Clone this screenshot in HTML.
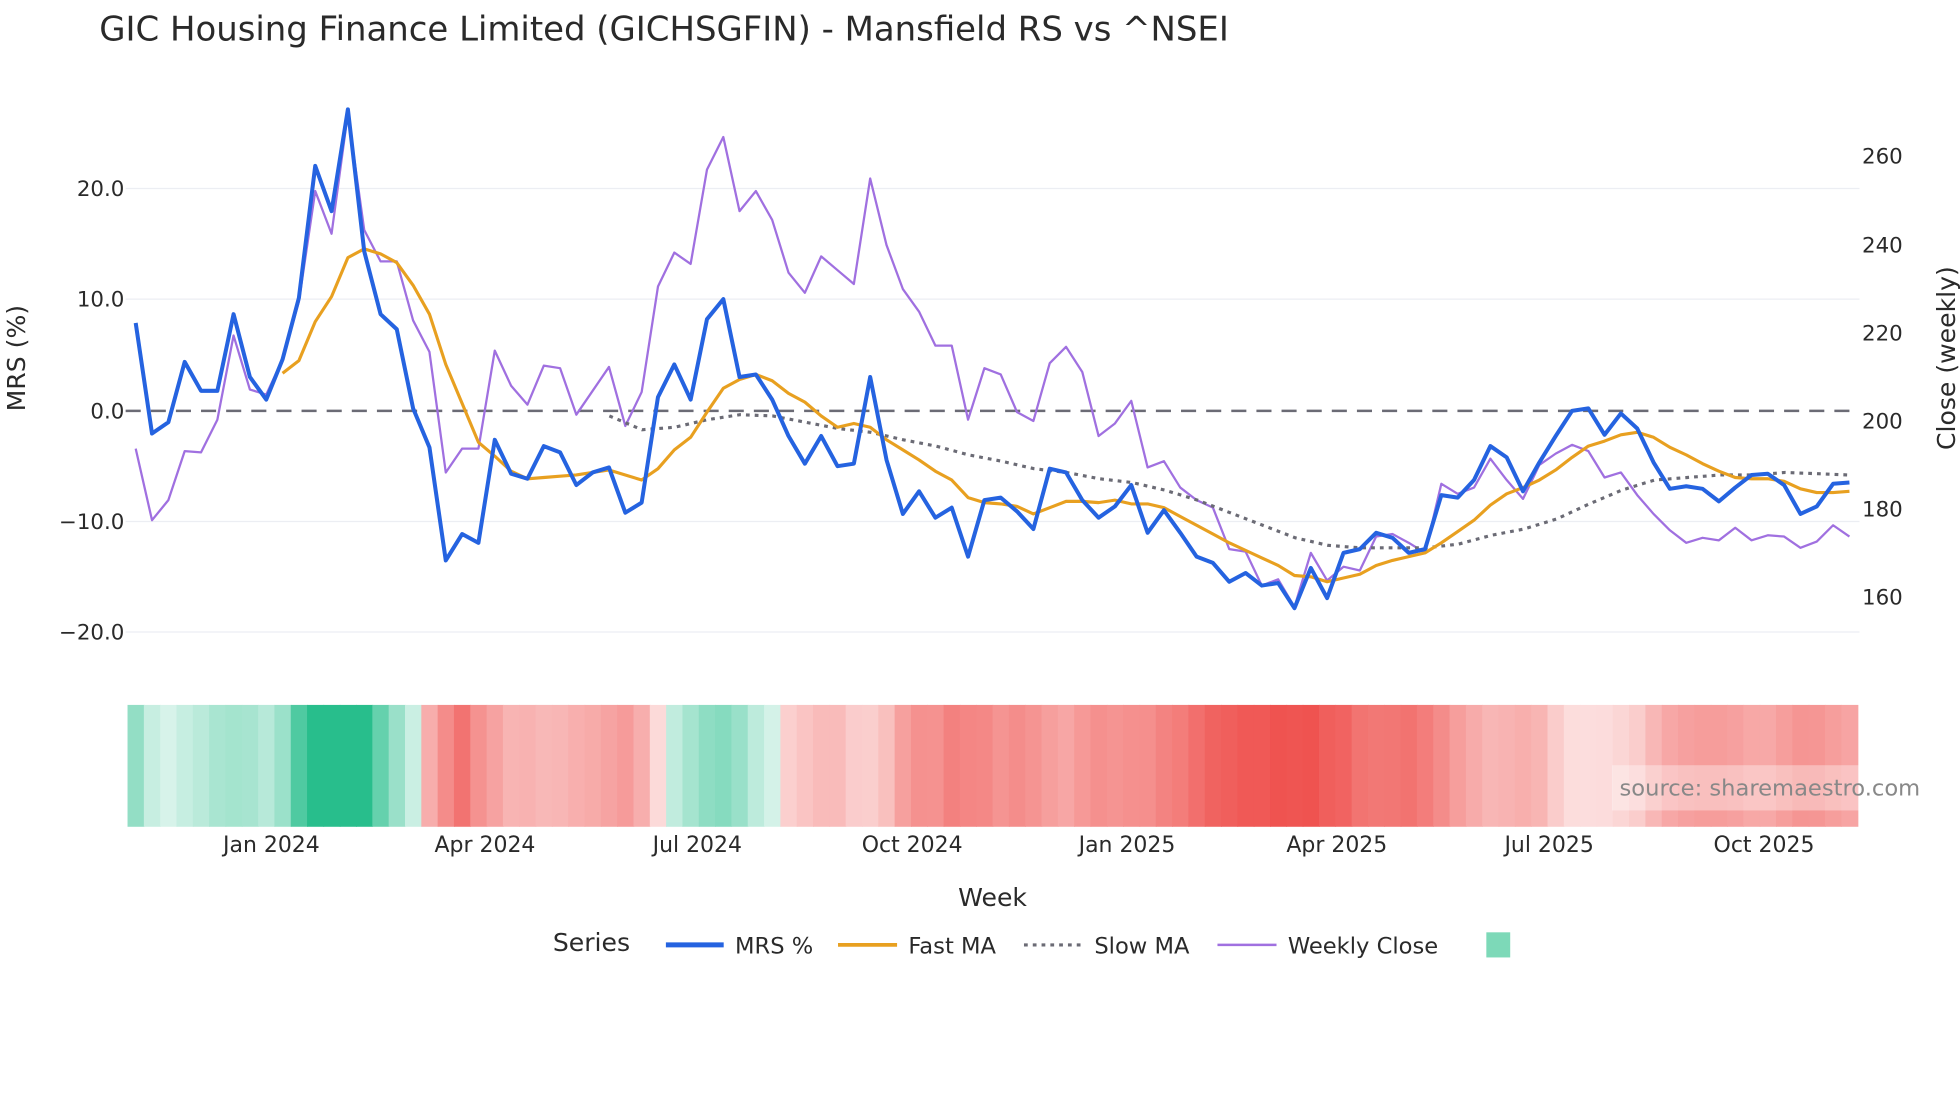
<!DOCTYPE html>
<html><head><meta charset="utf-8"><style>
html,body{margin:0;padding:0;background:#fff;}
svg{display:block;font-family:"DejaVu Sans","Liberation Sans",sans-serif;}
</style></head><body>
<svg id="s" width="1960" height="1102" viewBox="0 0 1560 877" xmlns="http://www.w3.org/2000/svg">
<rect width="1560" height="877" fill="#fff"/>
<text x="79" y="32" font-size="27" fill="#2a2a2a">GIC Housing Finance Limited (GICHSGFIN) - Mansfield RS vs ^NSEI</text>
<g stroke="#eceef3" stroke-width="1">
<line x1="100" x2="1480" y1="150" y2="150"/><line x1="100" x2="1480" y1="238" y2="238"/>
<line x1="100" x2="1480" y1="415" y2="415"/><line x1="100" x2="1480" y1="503" y2="503"/>
</g>
<g font-size="17" fill="#2a2a2a" text-anchor="end">
<text x="99" y="156">20.0</text><text x="99" y="244">10.0</text><text x="99" y="333">0.0</text>
<text x="99" y="421">−10.0</text><text x="99" y="509">−20.0</text>
</g>
<g font-size="17" fill="#2a2a2a">
<text x="1482" y="130">260</text><text x="1482" y="201">240</text><text x="1482" y="271">220</text>
<text x="1482" y="341">200</text><text x="1482" y="411">180</text><text x="1482" y="481">160</text>
</g>
<text transform="translate(20,285) rotate(-90)" font-size="20" fill="#2a2a2a" text-anchor="middle">MRS (%)</text>
<text transform="translate(1556,285) rotate(-90)" font-size="20" fill="#2a2a2a" text-anchor="middle">Close (weekly)</text>
<line x1="100" x2="1480" y1="327" y2="327" stroke="#6b6b75" stroke-width="2" stroke-dasharray="12,8"/>
<g id="heat"></g>
<g id="lines"></g>
<rect x="1283" y="609" width="197" height="36" fill="#fff" opacity="0.35"/>
<text x="1289" y="633" font-size="18" fill="#888">source: sharemaestro.com</text>
<g font-size="17.5" fill="#2a2a2a" text-anchor="middle">
<text x="216" y="678">Jan 2024</text><text x="386" y="678">Apr 2024</text><text x="555" y="678">Jul 2024</text>
<text x="726" y="678">Oct 2024</text><text x="897" y="678">Jan 2025</text><text x="1064" y="678">Apr 2025</text>
<text x="1233" y="678">Jul 2025</text><text x="1404" y="678">Oct 2025</text>
</g>
<text x="790" y="721" font-size="20" fill="#2a2a2a" text-anchor="middle">Week</text>
<text x="440" y="757" font-size="20" fill="#2a2a2a">Series</text>
<line x1="530" x2="576" y1="752" y2="752" stroke="#2563e0" stroke-width="4"/>
<text x="585" y="759" font-size="18" fill="#2a2a2a">MRS %</text>
<line x1="667" x2="714" y1="752" y2="752" stroke="#e8a020" stroke-width="3"/>
<text x="723" y="759" font-size="18" fill="#2a2a2a">Fast MA</text>
<line x1="815" x2="860" y1="752" y2="752" stroke="#6b6b75" stroke-width="2.5" stroke-dasharray="3,4"/>
<text x="871" y="759" font-size="18" fill="#2a2a2a">Slow MA</text>
<line x1="969" x2="1016" y1="752" y2="752" stroke="#a070e0" stroke-width="2"/>
<text x="1025" y="759" font-size="18" fill="#2a2a2a">Weekly Close</text>
<rect x="1183" y="742" width="19" height="20" fill="#7dd9b8"/>
</svg>
<script>
var mrsY=[257,345,336,288,311,311,250,300,318,286,237,132,168,87,200,250,262,325,356,446,425,432,350,377,381,355,360,386,376,372,408,400,316,290,318,254,238,300,298,318,347,369,347,371,369,300,366,409,391,412,404,443,398,396,407,421,373,376,398,412,403,386,424,406,424,443,448,463,456,466,464,484,452,476,440,437,424,428,440,437,394,396,382,355,364,391,368,347,327,325,346,329,341,368,389,387,389,399,388,378,377,386,409,403,385,384];
var clY=[357,414,398,359,360,334,267,310,314,286,240,152,186,90,183,208,208,255,280,376,357,357,279,307,322,291,293,330,311,292,339,312,228,201,210,135,109,168,152,175,217,233,204,215,226,142,195,230,248,275,275,334,293,298,328,335,289,276,296,347,337,319,372,367,388,398,404,437,439,466,461,483,440,462,451,454,427,425,432,440,385,393,388,365,382,397,370,361,354,359,380,376,394,409,422,432,428,430,420,430,426,427,436,431,418,427];
var faY=[297,287,256,236,205,198,202,209,227,250,290,321,352,363,375,381,380,379,378,376,374,378,382,373,358,348,328,309,302,298,303,313,320,331,340,337,340,350,358,366,375,382,396,400,401,403,409,404,399,399,400,398,401,401,404,411,418,425,432,438,444,450,458,459,463,460,457,450,446,443,440,432,423,414,402,393,388,382,374,364,355,351,346,344,348,356,362,369,375,380,381,381,383,389,392,392,391];
var slow=[[485,331],[511,342],[537,340],[563,334],[589,330],[615,331],[641,336],[667,341],[693,344],[719,350],[745,355],[771,362],[797,367],[823,373],[849,376],[875,381],[901,384],[927,390],[953,398],[979,408],[1005,418],[1031,428],[1057,434],[1083,436],[1109,436],[1135,436],[1161,433],[1187,426],[1213,421],[1239,413],[1265,401],[1291,390],[1317,382],[1343,380],[1369,378],[1395,378],[1421,376],[1447,377],[1472,378]];
var n=mrsY.length, step=(1472-108)/(n-1);
function X(i){return 108+i*step;}
function pts(arr,off){return arr.map(function(y,i){return X(i+off).toFixed(1)+","+y;}).join(" ");}
var NS="http://www.w3.org/2000/svg";
function el(t,a,p){var e=document.createElementNS(NS,t);for(var k in a)e.setAttribute(k,a[k]);p.appendChild(e);return e;}
var heat=document.getElementById("heat"), L=document.getElementById("lines");
function mix(a,b,t){return Math.round(a+(b-a)*t);}
for(var i=0;i<n;i++){
  var s=0,c2=0;for(var j=i-1;j<=i+1;j++){if(j>=0&&j<n){s+=mrsY[j];c2++;}}
  var v=(327-s/c2)/8.84; if(i==0)v=6;
  var base=v>=0?[40,190,140]:[239,83,80];
  var t=Math.min(Math.abs(v)/16,1); t=0.15+0.85*Math.pow(t,0.9);
  var c="rgb("+mix(255,base[0],t)+","+mix(255,base[1],t)+","+mix(255,base[2],t)+")";
  var x0=Math.max(100,X(i)-step/2), x1=Math.min(1480,X(i)+step/2+0.6);
  el("rect",{x:x0,y:561,width:x1-x0,height:97,fill:c},heat);
}
el("polyline",{points:pts(clY,0),fill:"none",stroke:"#a070e0","stroke-width":1.8,"stroke-linejoin":"round"},L);
el("polyline",{points:slow.map(function(p){return p.join(",");}).join(" "),fill:"none",stroke:"#6b6b75","stroke-width":2.5,"stroke-dasharray":"3,4"},L);
el("polyline",{points:pts(faY,9),fill:"none",stroke:"#e8a020","stroke-width":2.5,"stroke-linejoin":"round"},L);
el("polyline",{points:pts(mrsY,0),fill:"none",stroke:"#2563e0","stroke-width":3.2,"stroke-linejoin":"round"},L);
</script>
</body></html>
